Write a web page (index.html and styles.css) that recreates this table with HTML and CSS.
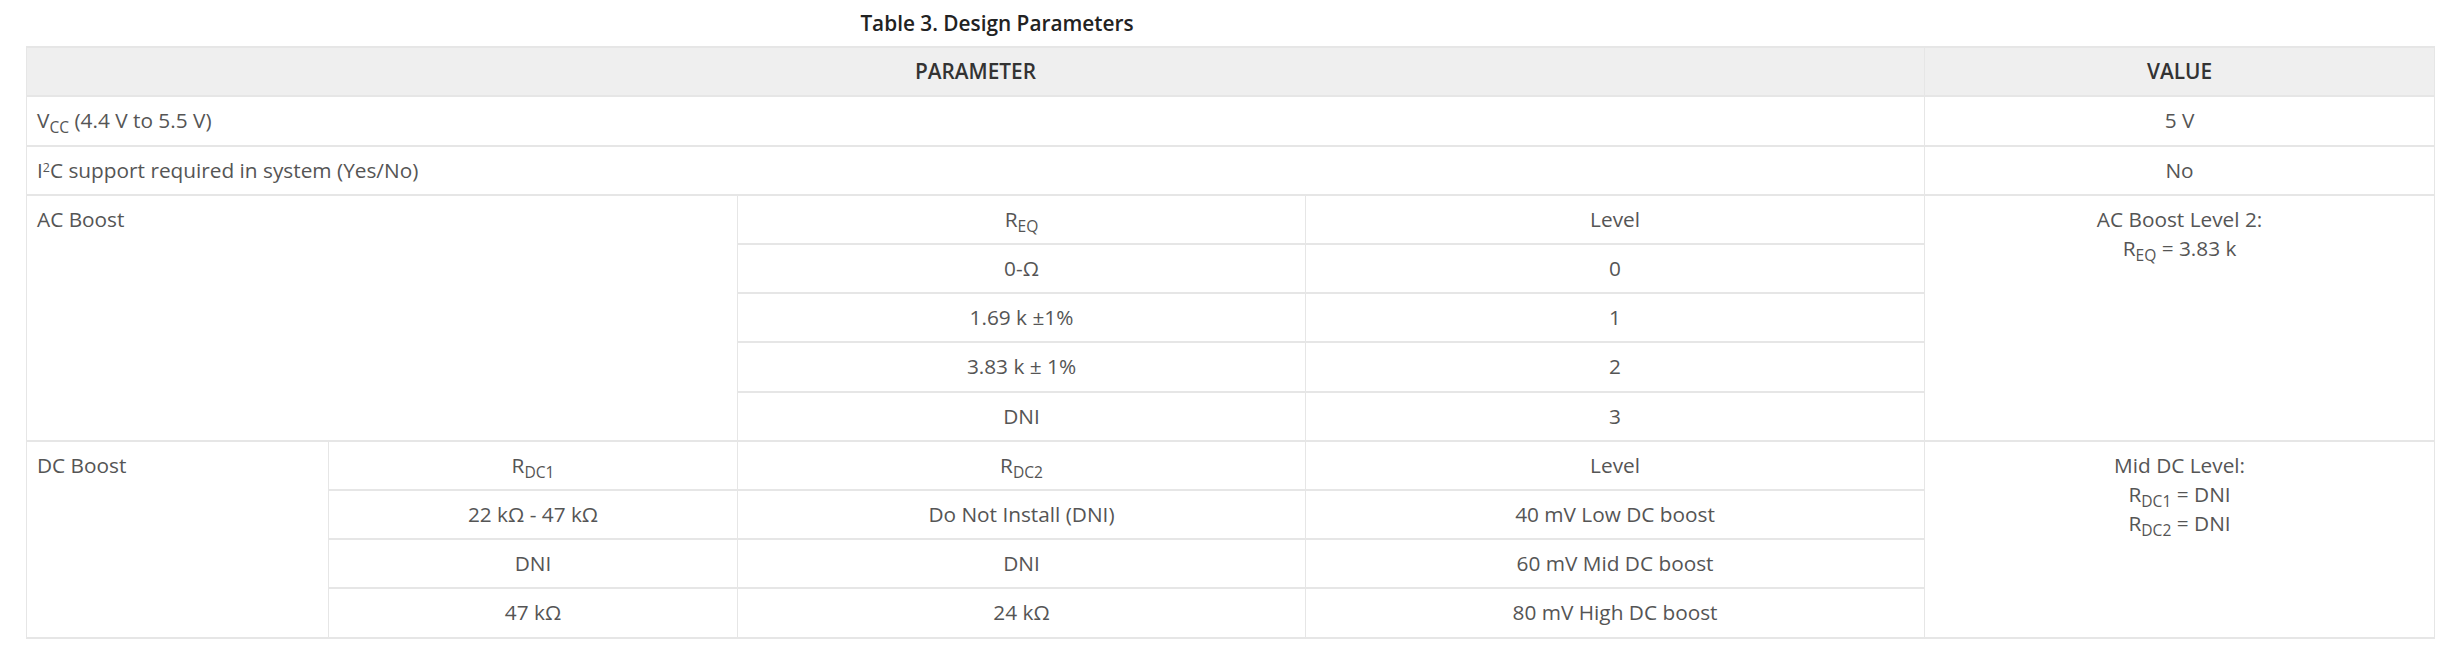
FILE: index.html
```html
<!DOCTYPE html>
<html lang="en">
<head>
<meta charset="utf-8">
<title>Table 3. Design Parameters</title>
<link rel="stylesheet" href="styles.css">
</head>
<body>
<div class="page">
  <div class="caption">Table 3. Design Parameters</div>
  <table class="params">
    <colgroup>
      <col class="c1"><col class="c2"><col class="c3"><col class="c4"><col class="c5">
    </colgroup>
    <thead>
      <tr><th colspan="4">PARAMETER</th><th>VALUE</th></tr>
    </thead>
    <tbody>
      <tr><td colspan="4" class="name">V<sub>CC</sub> (4.4 V to 5.5 V)</td><td>5 V</td></tr>
      <tr><td colspan="4" class="name">I<sup>2</sup>C support required in system (Yes/No)</td><td>No</td></tr>
      <tr><td colspan="2" rowspan="5" class="name top">AC Boost</td><td>R<sub>EQ</sub></td><td>Level</td><td rowspan="5" class="top">AC Boost Level 2:<br>R<sub>EQ</sub> = 3.83 k</td></tr>
      <tr><td>0-Ω</td><td>0</td></tr>
      <tr><td>1.69 k ±1%</td><td>1</td></tr>
      <tr><td>3.83 k ± 1%</td><td>2</td></tr>
      <tr><td>DNI</td><td>3</td></tr>
      <tr><td rowspan="4" class="name top">DC Boost</td><td>R<sub>DC1</sub></td><td>R<sub>DC2</sub></td><td>Level</td><td rowspan="4" class="top">Mid DC Level:<br>R<sub>DC1</sub> = DNI<br>R<sub>DC2</sub> = DNI</td></tr>
      <tr><td>22 kΩ - 47 kΩ</td><td>Do Not Install (DNI)</td><td>40 mV Low DC boost</td></tr>
      <tr><td>DNI</td><td>DNI</td><td>60 mV Mid DC boost</td></tr>
      <tr><td>47 kΩ</td><td>24 kΩ</td><td>80 mV High DC boost</td></tr>
    </tbody>
  </table>
</div>
</body>
</html>
```

FILE: styles.css
```css
html, body {
  margin: 0;
  padding: 0;
  background: #ffffff;
}

.page {
  padding: 9px 26px 0 26px;
  font-family: "Open Sans", "Liberation Sans", sans-serif;
  font-size: 20.8px;
  line-height: 29.2px;
  color: #555555;
}

.caption {
  width: 1942px;
  text-align: center;
  font-weight: 600;
  color: #222222;
  margin-bottom: 8px;
}

.params {
  width: 2408px;
  table-layout: fixed;
  border-collapse: collapse;
  border-top: 2px solid #e6e6e6;
  border-bottom: 2px solid #e6e6e6;
  border-left: 1px solid #e6e6e6;
  border-right: 1px solid #e6e6e6;
}

.c1 { width: 302px; }
.c2 { width: 409px; }
.c3 { width: 568px; }
.c4 { width: 619px; }
.c5 { width: 510px; }

.params th,
.params td {
  padding: 9px 10px;
  text-align: center;
  vertical-align: middle;
  border-top: 2px solid #e6e6e6;
  border-bottom: 2px solid #e6e6e6;
  border-left: 1px solid #e6e6e6;
  border-right: 1px solid #e6e6e6;
}

.params th {
  background: #efefef;
  color: #333333;
  font-weight: 600;
}

.params td.name {
  text-align: left;
}

.params td.top {
  vertical-align: top;
}

sub {
  font-size: 75%;
  line-height: 0;
  vertical-align: -0.3em;
}

sup {
  font-size: 60%;
  line-height: 0;
  vertical-align: 0.45em;
}
```
